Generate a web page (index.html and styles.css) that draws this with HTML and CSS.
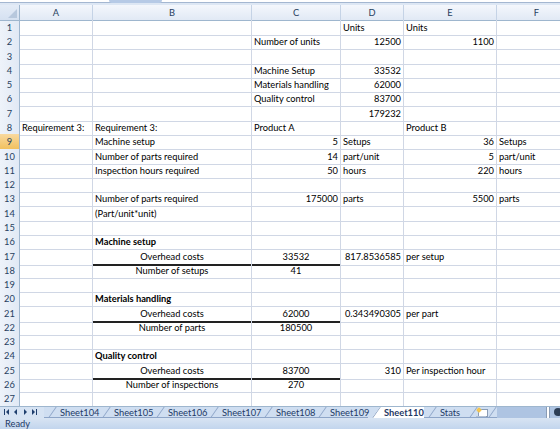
FILE: index.html
```html
<!DOCTYPE html>
<html lang="en">

<head>
    <meta charset="UTF-8">
    <title>Requirement 3</title>
    <link rel="stylesheet" href="styles.css">
</head>

<body>
    <div id="window">
        <div class="topbar"><div class="thumb"></div></div>

        <div class="sheet">
            <div class="row head">
                <div class="corner"><span></span></div>
                <div class="ch">A</div><div class="ch">B</div><div class="ch">C</div><div class="ch">D</div><div class="ch">E</div><div class="ch">F</div>
            </div>
            <div class="row"><div class="rh">1</div><div class="cell"></div><div class="cell"></div><div class="cell"></div><div class="cell">Units</div><div class="cell">Units</div><div class="cell"></div></div>
            <div class="row"><div class="rh">2</div><div class="cell"></div><div class="cell"></div><div class="cell">Number of units</div><div class="cell r">12500</div><div class="cell r">1100</div><div class="cell"></div></div>
            <div class="row"><div class="rh">3</div><div class="cell"></div><div class="cell"></div><div class="cell"></div><div class="cell"></div><div class="cell"></div><div class="cell"></div></div>
            <div class="row"><div class="rh">4</div><div class="cell"></div><div class="cell"></div><div class="cell">Machine Setup</div><div class="cell r">33532</div><div class="cell"></div><div class="cell"></div></div>
            <div class="row"><div class="rh">5</div><div class="cell"></div><div class="cell"></div><div class="cell">Materials handling</div><div class="cell r">62000</div><div class="cell"></div><div class="cell"></div></div>
            <div class="row"><div class="rh">6</div><div class="cell"></div><div class="cell"></div><div class="cell">Quality control</div><div class="cell r">83700</div><div class="cell"></div><div class="cell"></div></div>
            <div class="row"><div class="rh">7</div><div class="cell"></div><div class="cell"></div><div class="cell"></div><div class="cell r">179232</div><div class="cell"></div><div class="cell"></div></div>
            <div class="row"><div class="rh">8</div><div class="cell">Requirement 3:</div><div class="cell">Requirement 3:</div><div class="cell">Product A</div><div class="cell"></div><div class="cell">Product B</div><div class="cell"></div></div>
            <div class="row"><div class="rh sel">9</div><div class="cell"></div><div class="cell">Machine setup</div><div class="cell r">5</div><div class="cell">Setups</div><div class="cell r">36</div><div class="cell">Setups</div></div>
            <div class="row"><div class="rh">10</div><div class="cell"></div><div class="cell">Number of parts required</div><div class="cell r">14</div><div class="cell">part/unit</div><div class="cell r">5</div><div class="cell">part/unit</div></div>
            <div class="row"><div class="rh">11</div><div class="cell"></div><div class="cell">Inspection hours required</div><div class="cell r">50</div><div class="cell">hours</div><div class="cell r">220</div><div class="cell">hours</div></div>
            <div class="row"><div class="rh">12</div><div class="cell"></div><div class="cell"></div><div class="cell"></div><div class="cell"></div><div class="cell"></div><div class="cell"></div></div>
            <div class="row"><div class="rh">13</div><div class="cell"></div><div class="cell">Number of parts required</div><div class="cell r">175000</div><div class="cell">parts</div><div class="cell r">5500</div><div class="cell">parts</div></div>
            <div class="row"><div class="rh">14</div><div class="cell"></div><div class="cell">(Part/unit*unit)</div><div class="cell"></div><div class="cell"></div><div class="cell"></div><div class="cell"></div></div>
            <div class="row"><div class="rh">15</div><div class="cell"></div><div class="cell"></div><div class="cell"></div><div class="cell"></div><div class="cell"></div><div class="cell"></div></div>
            <div class="row"><div class="rh">16</div><div class="cell"></div><div class="cell b">Machine setup</div><div class="cell"></div><div class="cell"></div><div class="cell"></div><div class="cell"></div></div>
            <div class="row"><div class="rh">17</div><div class="cell"></div><div class="cell c line">Overhead costs</div><div class="cell c line">33532</div><div class="cell r">817.8536585</div><div class="cell">per setup</div><div class="cell"></div></div>
            <div class="row"><div class="rh">18</div><div class="cell"></div><div class="cell c">Number of setups</div><div class="cell c">41</div><div class="cell"></div><div class="cell"></div><div class="cell"></div></div>
            <div class="row"><div class="rh">19</div><div class="cell"></div><div class="cell"></div><div class="cell"></div><div class="cell"></div><div class="cell"></div><div class="cell"></div></div>
            <div class="row"><div class="rh">20</div><div class="cell"></div><div class="cell b">Materials handling</div><div class="cell"></div><div class="cell"></div><div class="cell"></div><div class="cell"></div></div>
            <div class="row"><div class="rh">21</div><div class="cell"></div><div class="cell c line">Overhead costs</div><div class="cell c line">62000</div><div class="cell r">0.343490305</div><div class="cell">per part</div><div class="cell"></div></div>
            <div class="row"><div class="rh">22</div><div class="cell"></div><div class="cell c">Number of parts</div><div class="cell c">180500</div><div class="cell"></div><div class="cell"></div><div class="cell"></div></div>
            <div class="row"><div class="rh">23</div><div class="cell"></div><div class="cell"></div><div class="cell"></div><div class="cell"></div><div class="cell"></div><div class="cell"></div></div>
            <div class="row"><div class="rh">24</div><div class="cell"></div><div class="cell b">Quality control</div><div class="cell"></div><div class="cell"></div><div class="cell"></div><div class="cell"></div></div>
            <div class="row"><div class="rh">25</div><div class="cell"></div><div class="cell c line">Overhead costs</div><div class="cell c line">83700</div><div class="cell r">310</div><div class="cell">Per inspection hour</div><div class="cell"></div></div>
            <div class="row"><div class="rh">26</div><div class="cell"></div><div class="cell c">Number of inspections</div><div class="cell c">270</div><div class="cell"></div><div class="cell"></div><div class="cell"></div></div>
            <div class="row"><div class="rh">27</div><div class="cell"></div><div class="cell"></div><div class="cell"></div><div class="cell"></div><div class="cell"></div><div class="cell"></div></div>
        </div>

        <div class="tabbar">
            <div class="nav">
                <svg width="40" height="12" viewBox="0 0 40 12">
                    <g fill="#1f3f6e">
                        <rect x="4" y="3" width="1" height="6"/><path d="M9 3 L6 6 L9 9 Z"/>
                        <path d="M17 3 L14 6 L17 9 Z"/>
                        <path d="M24 3 L27 6 L24 9 Z"/>
                        <path d="M32 3 L35 6 L32 9 Z"/><rect x="36" y="3" width="1" height="6"/>
                    </g>
                </svg>
            </div>
            <div class="tabs">
                <div class="tab">Sheet104</div>
                <div class="tab">Sheet105</div>
                <div class="tab">Sheet106</div>
                <div class="tab">Sheet107</div>
                <div class="tab">Sheet108</div>
                <div class="tab">Sheet109</div>
                <div class="tab active">Sheet110</div>
                <div class="tab stats">Stats</div>
                <div class="tab newtab">
                    <svg width="14" height="11" viewBox="0 0 14 11">
                        <rect x="3.5" y="2.5" width="9" height="7" fill="#fff" stroke="#8a9cb5"/>
                        <path d="M1 9.5 H11" stroke="#b5c2d3"/>
                        <circle cx="4" cy="3" r="2" fill="#f0b429"/>
                        <path d="M4 0 V6 M1 3 H7" stroke="#f7d36b" stroke-width="0.8"/>
                    </svg>
                </div>
            </div>
            <div class="hscroll">
                <div class="split"></div>
                <div class="knob"></div>
            </div>
        </div>

        <div class="status">Ready</div>
    </div>
</body>

</html>
```

FILE: styles.css
```css
* {
    box-sizing: border-box;
}

body {
    margin: 0;
    font-family: Lato, "Open Sans", sans-serif;
    font-size: 9.3px;
    color: #000;
}

#window {
    width: 560px;
    height: 429px;
    overflow: hidden;
    background-color: #fff;
}

.topbar {
    height: 5px;
    border-top: 2px solid #fff;
    background-color: #dde7f4;
    position: relative;
    box-shadow: inset 0 1px 0 #a4b7d1;
}

.thumb {
    position: absolute;
    left: 109px;
    top: -2px;
    width: 53px;
    height: 3px;
    background-color: #b6cae6;
    border-radius: 0 0 3px 3px;
}

.sheet {
    height: 401px;
    overflow: hidden;
}

.row {
    display: grid;
    grid-template-columns: 20px 73px 159px 89px 63px 93px 80px;
    height: calc(386px / 27);
}

.row.head {
    height: 15px;
}

.corner {
    background: linear-gradient(#e4ecf7, #d5e1f1);
    border-right: 1px solid #9eb6ce;
    border-bottom: 1px solid #9eb6ce;
    position: relative;
}

.corner span {
    position: absolute;
    right: 2px;
    bottom: 2px;
    width: 0;
    height: 0;
    border-left: 9px solid transparent;
    border-bottom: 9px solid #b7c8dd;
}

.ch {
    background: linear-gradient(#f4f7fc, #e1e9f5);
    border-right: 1px solid #c5d3e6;
    border-bottom: 1px solid #9eb6ce;
    color: #27415f;
    text-align: center;
    line-height: 15px;
}

.rh {
    background: linear-gradient(to right, #eef3fa, #e1e9f5);
    border-right: 1px solid #9eb6ce;
    border-bottom: 1px solid #c5d3e6;
    color: #27415f;
    text-align: center;
    line-height: 15px;
}

.rh.sel {
    background: linear-gradient(#f9d99f, #f1c15f);
    border-bottom-color: #c9a66b;
}

.cell {
    border-right: 1px solid #d0d7e5;
    border-bottom: 1px solid #d0d7e5;
    padding: 0 2px;
    line-height: 15px;
    white-space: nowrap;
}

.cell.r {
    text-align: right;
}

.cell.c {
    text-align: center;
}

.cell.b {
    font-weight: bold;
}

.cell.line {
    border-bottom: 2px solid #222;
}

.tabbar {
    height: 12px;
    display: flex;
    background-color: #d6e3f3;
    border-top: 1px solid #9eb6ce;
}

.nav {
    width: 44px;
    flex: none;
}

.nav svg {
    display: block;
    margin-top: -1px;
}

.tabs {
    display: flex;
    flex: none;
    background-color: #cfdef1;
}

.tab {
    position: relative;
    width: 54px;
    height: 11px;
    padding-left: 16px;
    color: #1d3a66;
    line-height: 11px;
    border-bottom: 1px solid #8da5c8;
    flex: none;
}

.tab::before {
    content: '';
    position: absolute;
    left: 4px;
    top: 0;
    height: 11px;
    border-left: 1px solid #8da5c8;
    transform: skewX(-35deg);
    transform-origin: bottom left;
}

.tab.active {
    background-color: #fff;
    font-weight: bold;
    color: #1f3864;
    border-bottom-color: #fff;
    width: 56px;
    clip-path: polygon(4px 100%, 12px 0, 100% 0, 100% 100%);
    z-index: 1;
}

.tab.active::before {
    border-left-color: #7b95bb;
}

.tab.stats {
    width: 41px;
}

.tab.newtab {
    width: 32px;
    padding-left: 10px;
}

.tab.newtab::after {
    content: '';
    position: absolute;
    right: 8px;
    top: 0;
    height: 11px;
    border-left: 1px solid #8da5c8;
    transform: skewX(-35deg);
    transform-origin: bottom left;
}

.tab.newtab svg {
    display: block;
}

.hscroll {
    flex: 1;
    display: flex;
    background-color: #aec4e2;
    padding-left: 49px;
}

.split {
    width: 4px;
    height: 11px;
    background-color: #fff;
    border-left: 1px solid #8a9cb5;
    border-right: 1px solid #8a9cb5;
}

.knob {
    width: 8px;
    height: 8px;
    margin: 1px 0 0 4px;
    border-radius: 50%;
    background-color: #2d3e55;
}

.status {
    height: 11px;
    padding-left: 5px;
    background: linear-gradient(#d8e4f3, #c2d5ed);
    color: #1d3a66;
    line-height: 11px;
}
```
